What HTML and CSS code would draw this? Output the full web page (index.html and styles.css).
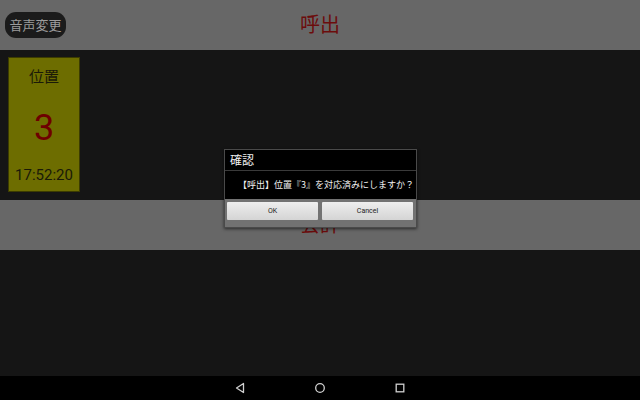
FILE: index.html
```html
<!DOCTYPE html>
<html lang="ja">
<head>
<meta charset="utf-8">
<title>呼出</title>
<link rel="stylesheet" href="styles.css">
</head>
<body>
<div class="screen">
  <div class="bar">
    <button class="voice-btn">音声変更</button>
    <div class="bar-title">呼出</div>
  </div>
  <div class="panel panel-top">
    <div class="tile">
      <div class="tile-label">位置</div>
      <div class="tile-num">3</div>
      <div class="tile-time">17:52:20</div>
    </div>
  </div>
  <div class="bar">
    <div class="bar-title">会計</div>
  </div>
  <div class="panel panel-bottom"></div>
  <div class="navbar">
    <svg class="nav-icon" width="12" height="12" viewBox="0 0 12 12"><path d="M9.5 1.5 L2.5 6 L9.5 10.5 Z" fill="none" stroke="#d0d0d0" stroke-width="1.3" stroke-linejoin="round"/></svg>
    <svg class="nav-icon" width="12" height="12" viewBox="0 0 12 12"><circle cx="6" cy="6" r="4.3" fill="none" stroke="#d0d0d0" stroke-width="1.3"/></svg>
    <svg class="nav-icon" width="12" height="12" viewBox="0 0 12 12"><rect x="2.2" y="2.2" width="7.6" height="7.6" fill="none" stroke="#d0d0d0" stroke-width="1.3"/></svg>
  </div>

  <div class="dialog">
    <div class="dialog-title">確認</div>
    <div class="dialog-msg">【呼出】位置『3』を対応済みにしますか？</div>
    <div class="dialog-buttons">
      <button class="dlg-btn">OK</button>
      <button class="dlg-btn">Cancel</button>
    </div>
  </div>
</div>
</body>
</html>
```

FILE: styles.css
```css
html, body {
  margin: 0;
  padding: 0;
  background: #151515;
}
body {
  font-family: "Noto Sans CJK JP", Roboto, "Noto Sans", sans-serif;
}
.screen {
  position: relative;
  width: 640px;
  height: 400px;
  display: flex;
  flex-direction: column;
  overflow: hidden;
}
.bar {
  position: relative;
  height: 50px;
  flex: 0 0 50px;
  background: #676767;
  display: flex;
  align-items: center;
  justify-content: center;
}
.bar-title {
  font-size: 20px;
  color: #6c0c0c;
  line-height: 1;
  margin-top: -2px;
}
.voice-btn {
  position: absolute;
  left: 5px;
  top: 12px;
  width: 61px;
  height: 26px;
  border: none;
  border-radius: 11px;
  background: #1b1b1b;
  color: #9c9c9c;
  font-family: "Noto Sans CJK JP", sans-serif;
  font-size: 13px;
  padding: 0;
  line-height: 26px;
}
.panel {
  background: #151515;
}
.panel-top {
  height: 150px;
  flex: 0 0 150px;
  padding: 7px 0 0 8px;
  box-sizing: border-box;
}
.panel-bottom {
  flex: 1 1 auto;
}
.tile {
  width: 72px;
  height: 135px;
  box-sizing: border-box;
  background: #6d6d00;
  border: 1px solid #3c3c00;
  display: flex;
  flex-direction: column;
  align-items: center;
}
.tile-label {
  margin-top: 9px;
  font-size: 15px;
  line-height: 18px;
  color: #1a1a08;
}
.tile-num {
  margin-top: 23px;
  font-family: Roboto, sans-serif;
  font-size: 36px;
  line-height: 40px;
  color: #6e0000;
}
.tile-time {
  margin-top: 18px;
  font-family: Roboto, sans-serif;
  font-size: 15px;
  line-height: 18px;
  color: #1a1a08;
}
.navbar {
  height: 24px;
  flex: 0 0 24px;
  background: #000;
  display: flex;
  align-items: center;
  justify-content: center;
  gap: 68px;
}
.nav-icon {
  display: block;
}
.dialog {
  position: absolute;
  left: 224px;
  top: 149px;
  width: 193px;
  box-sizing: border-box;
  border: 1px solid #4a4a4a;
  background: #000;
  display: flex;
  flex-direction: column;
  box-shadow: 0 1px 3px rgba(0,0,0,0.6);
}
.dialog-title {
  height: 20px;
  line-height: 20px;
  padding-left: 5px;
  color: #f0f0f0;
  font-size: 12px;
  border-bottom: 1px solid #3a3a3a;
}
.dialog-msg {
  height: 28px;
  line-height: 28px;
  color: #f0f0f0;
  font-size: 9px;
  padding-left: 13px;
  white-space: nowrap;
}
.dialog-buttons {
  background: #727272;
  display: flex;
  gap: 4px;
  padding: 3px 3px 7px 2px;
}
.dlg-btn {
  flex: 1 1 0;
  height: 18px;
  border: none;
  border-radius: 1px;
  background: linear-gradient(#eeeeee, #d4d4d4);
  color: #222;
  font-family: Roboto, sans-serif;
  font-size: 7px;
  padding: 0;
}
```
